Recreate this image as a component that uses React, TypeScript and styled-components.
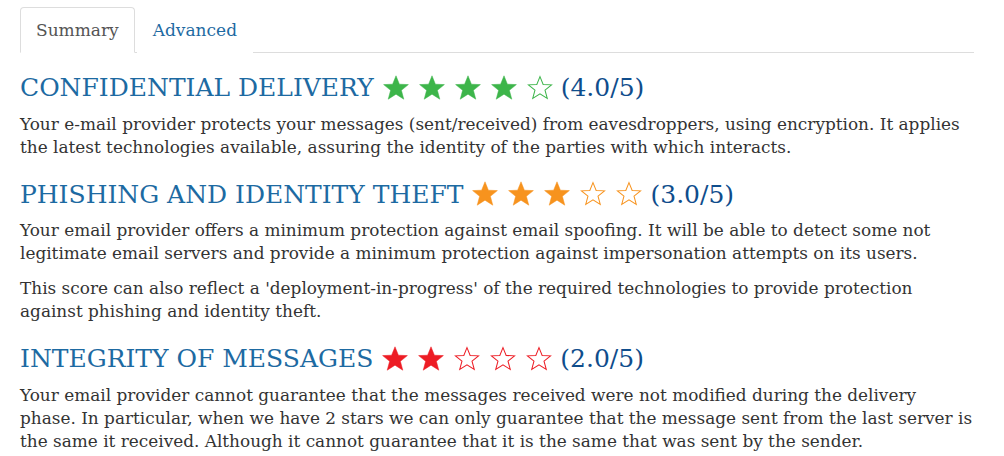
import React from 'react'
import styled, { createGlobalStyle } from 'styled-components'

const GlobalStyle = createGlobalStyle`
  html, body {
    margin: 0;
    padding: 0;
    background: #fff;
  }
  body {
    font-family: "DejaVu Serif", serif;
    font-size: 16.9px;
    line-height: 23px;
    color: #333;
  }
`

const Page = styled.div`
  padding: 7px 30px 0 20px;
`

const Tabs = styled.ul`
  display: flex;
  list-style: none;
  margin: 0;
  padding: 0;
  border-bottom: 1px solid #ddd;
`

const Tab = styled.li<{ $active?: boolean }>`
  margin-right: 2px;
  margin-bottom: -1px;
  padding: 11px 15px 10px;
  border: 1px solid ${(p) => (p.$active ? '#ddd' : 'transparent')};
  border-bottom-color: ${(p) => (p.$active ? '#fff' : 'transparent')};
  border-radius: 4px 4px 0 0;
  background: #fff;
  font-size: 17px;
  color: ${(p) => (p.$active ? '#555' : '#1d6aa2')};
  cursor: pointer;
`

const Section = styled.section`
  &:first-of-type h3 {
    margin-top: 21px;
  }
`

const Heading = styled.h3`
  display: flex;
  align-items: center;
  margin: 22px 0 11px;
  font-size: 25px;
  font-weight: normal;
  line-height: 27.5px;
  color: #1d6aa2;
  text-transform: uppercase;
`

const Stars = styled.span`
  display: inline-flex;
  gap: 10px;
  margin: 0 8px 0 9px;
`

const Score = styled.span`
  color: #0f4d8c;
`

const Text = styled.p`
  margin: 0 0 12px;
`

const StarIcon = ({ filled, color }: { filled: boolean; color: string }) => (
  <svg width="26" height="26" viewBox="0 0 26 26">
    <path
      d="M13 0.8 L16.4 9.2 L25.4 9.6 L18.4 15.3 L20.8 24.2 L13 19.2 L5.2 24.2 L7.6 15.3 L0.6 9.6 L9.6 9.2 Z"
      fill={filled ? color : 'none'}
      stroke={color}
      strokeWidth={filled ? 0.5 : 1.1}
      strokeLinejoin="miter"
      transform={filled ? undefined : 'translate(0.9 0.9) scale(0.93)'}
    />
  </svg>
)

const Rating = ({ score, color }: { score: number; color: string }) => (
  <>
    <Stars>
      {[1, 2, 3, 4, 5].map((i) => (
        <StarIcon key={i} filled={i <= score} color={color} />
      ))}
    </Stars>
    <Score>({score.toFixed(1)}/5)</Score>
  </>
)

const sections = [
  {
    title: 'Confidential delivery',
    score: 4,
    color: '#3db54a',
    texts: [
      'Your e-mail provider protects your messages (sent/received) from eavesdroppers, using encryption. It applies the latest technologies available, assuring the identity of the parties with which interacts.',
    ],
  },
  {
    title: 'Phishing and identity theft',
    score: 3,
    color: '#f7931e',
    texts: [
      'Your email provider offers a minimum protection against email spoofing. It will be able to detect some not legitimate email servers and provide a minimum protection against impersonation attempts on its users.',
      "This score can also reflect a 'deployment-in-progress' of the required technologies to provide protection against phishing and identity theft.",
    ],
  },
  {
    title: 'Integrity of messages',
    score: 2,
    color: '#ed1c24',
    texts: [
      'Your email provider cannot guarantee that the messages received were not modified during the delivery phase. In particular, when we have 2 stars we can only guarantee that the message sent from the last server is the same it received. Although it cannot guarantee that it is the same that was sent by the sender.',
    ],
  },
]

const App = () => {
  return (
    <>
      <GlobalStyle />
      <Page>
        <Tabs>
          <Tab $active>Summary</Tab>
          <Tab>Advanced</Tab>
        </Tabs>
        {sections.map((s) => (
          <Section key={s.title}>
            <Heading>
              {s.title}
              <Rating score={s.score} color={s.color} />
            </Heading>
            {s.texts.map((t, i) => (
              <Text key={i}>{t}</Text>
            ))}
          </Section>
        ))}
      </Page>
    </>
  )
}

export default App
